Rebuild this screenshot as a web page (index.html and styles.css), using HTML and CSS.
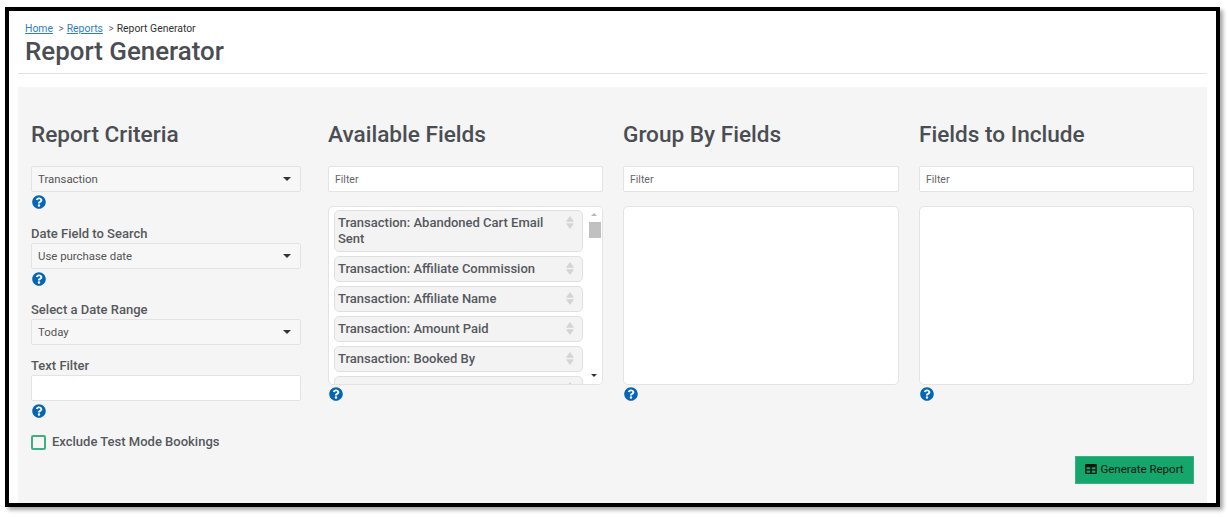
FILE: index.html
```html
<!DOCTYPE html>
<html lang="en">
<head>
<meta charset="utf-8">
<title>Report Generator</title>
<link rel="stylesheet" href="styles.css">
</head>
<body>
<svg class="defs" width="0" height="0" aria-hidden="true">
  <symbol id="help" viewBox="0 0 512 512"><path d="M504 256c0 137-111 248-248 248S8 393 8 256 119 8 256 8s248 111 248 248zM262.700 90c-54.500 0-89.300 23-116.500 63.800-3.500 5.300-2.400 12.400 2.700 16.300l34.700 26.300c5.200 3.900 12.600 3 16.700-2.100 17.900-22.700 30.100-35.800 57.300-35.800 20.400 0 45.700 13.100 45.700 33 0 15-12.400 22.700-32.600 34-23.600 13.200-54.800 29.700-54.800 70.900V300c0 6.600 5.400 12 12 12h56c6.600 0 12-5.400 12-12v-1.300c0-28.600 83.500-29.800 83.500-107.100C379.400 133.400 319 90 262.700 90zM256 339c-25.500 0-46.200 20.700-46.200 46.200s20.700 46.200 46.200 46.200 46.200-20.700 46.200-46.200S281.500 339 256 339z"/></symbol>
  <symbol id="sort" viewBox="0 0 10 16"><path d="M5 0l4.500 6.200a.6.600 0 0 1-.5 1H1a.6.600 0 0 1-.5-1zM5 16L.5 9.800a.6.600 0 0 1 .5-1h8a.6.600 0 0 1 .5 1z"/></symbol>
</svg>
<div class="frame">
  <header class="page-head">
    <nav class="crumbs"><a href="#">Home</a><span class="sep">&gt;</span><a href="#">Reports</a><span class="sep">&gt;</span><span class="current">Report Generator</span></nav>
    <h1>Report Generator</h1>
  </header>
  <main class="panel">
    <div class="columns">
      <section class="col col-criteria">
        <h2>Report Criteria</h2>
        <div class="select">Transaction</div>
        <svg class="help"><use href="#help"/></svg>
        <label class="label label-date">Date Field to Search</label>
        <div class="select">Use purchase date</div>
        <svg class="help"><use href="#help"/></svg>
        <label class="label label-range">Select a Date Range</label>
        <div class="select">Today</div>
        <label class="label label-text">Text Filter</label>
        <div class="text-input"></div>
        <svg class="help"><use href="#help"/></svg>
        <div class="check-row"><span class="check"></span><span>Exclude Test Mode Bookings</span></div>
      </section>
      <section class="col col-fields">
        <h2>Available Fields</h2>
        <div class="filter">Filter</div>
        <div class="list has-items">
          <div class="items">
            <div class="item"><span>Transaction: Abandoned Cart Email Sent</span><svg class="sort"><use href="#sort"/></svg></div>
            <div class="item"><span>Transaction: Affiliate Commission</span><svg class="sort"><use href="#sort"/></svg></div>
            <div class="item"><span>Transaction: Affiliate Name</span><svg class="sort"><use href="#sort"/></svg></div>
            <div class="item"><span>Transaction: Amount Paid</span><svg class="sort"><use href="#sort"/></svg></div>
            <div class="item"><span>Transaction: Booked By</span><svg class="sort"><use href="#sort"/></svg></div>
            <div class="item"><span>Transaction: Business Name</span><svg class="sort"><use href="#sort"/></svg></div>
          </div>
          <div class="scrollbar"><i class="arrow up"></i><i class="thumb"></i><i class="arrow down"></i></div>
        </div>
        <svg class="help list-help"><use href="#help"/></svg>
      </section>
      <section class="col col-group">
        <h2>Group By Fields</h2>
        <div class="filter">Filter</div>
        <div class="list"></div>
        <svg class="help list-help"><use href="#help"/></svg>
      </section>
      <section class="col col-include">
        <h2>Fields to Include</h2>
        <div class="filter">Filter</div>
        <div class="list"></div>
        <svg class="help list-help"><use href="#help"/></svg>
      </section>
    </div>
    <button class="generate" type="button">
      <svg class="table-icon" viewBox="0 0 14 12"><path fill-rule="evenodd" d="M1.200 0h11.600C13.500 0 14 .5 14 1.200v9.600c0 .7-.5 1.200-1.200 1.200H1.200C.5 12 0 11.500 0 10.800V1.200C0 .5.500 0 1.200 0zM1.600 4v2.300h4.500V4zM7.900 4v2.300h4.500V4zM1.600 7.700v2.700h4.500V7.700zM7.900 7.700v2.700h4.500V7.700z"/></svg>
      Generate Report
    </button>
  </main>
</div>
</body>
</html>
```
FILE: styles.css
```css
* { box-sizing: border-box; }
html, body { margin: 0; padding: 0; background: #fff; }
body { width: 1228px; height: 517px; overflow: hidden; font-family: Roboto, "Liberation Sans", sans-serif; color: #464a4e; }
.defs { display: block; height: 0; }
.frame { width: 1215px; height: 500px; margin: 7px 0 0 5px; border: 4px solid #000; background: #fff; padding: 0 9px; box-shadow: 3px 3px 4px rgba(0,0,0,.35); overflow: hidden; }
.page-head { height: 63px; border-bottom: 1px solid #e2e2e2; padding: 11px 0 0 7px; }
.crumbs { font-size: 10.400px; line-height: 13px; height: 13px; color: #333; white-space: nowrap; }
.crumbs a { color: #2f80c2; text-decoration: underline; }
.sep { display: inline-block; margin: 0 3px 0 5.500px; color: #666; font-size: 10px; }
h1 { margin: 0; font-size: 25.900px; line-height: 32px; font-weight: 500; color: #4a4e52; }
.panel { margin-top: 13px; height: 416px; background: #f5f5f5; padding: 34px 13px 0; position: relative; }
.columns { display: flex; }
.col-criteria { width: 270px; margin-right: 27px; }
.col-fields { width: 275px; margin-right: 20px; }
.col-group { width: 276px; margin-right: 20px; }
.col-include { width: 275px; }
h2 { margin: 0 0 17px; font-size: 22.600px; line-height: 27px; padding-bottom: 1px; font-weight: 500; color: #4a4e52; white-space: nowrap; }
.select, .filter, .text-input { height: 26px; border: 1px solid #e3e3e3; border-radius: 2px; font-size: 11.400px; line-height: 25px; padding-left: 6px; }
.select { background: #f7f7f7; position: relative; color: #555; }
.select::after { content: ""; position: absolute; right: 9px; top: 10px; border: 4px solid transparent; border-top-color: #333; border-bottom: 0; }
.filter { background: #fff; color: #666; font-size: 10.500px; }
.text-input { background: #fff; }
.help { display: block; width: 14px; height: 14px; margin: 3px 0 0 1px; fill: #0565b5; }
.label { display: block; font-size: 13px; line-height: 18px; font-weight: 500; color: #55595d; }
.label-date { margin-top: 16px; }
.label-range { margin-top: 15px; }
.label-text { margin-top: 12px; }
.check-row { display: flex; align-items: center; gap: 6px; margin-top: 16px; font-size: 13px; font-weight: 500; line-height: 16px; color: #55595d; }
.check { width: 15px; height: 15px; border: 2px solid #3fae85; border-radius: 2px; background: #f6f6f6; }
.list { height: 179px; margin-top: 14px; border: 1px solid #e3e3e3; border-radius: 5px; background: #fff; overflow: hidden; display: flex; }
.items { flex: 1; padding: 3px 4px 0 5px; overflow: hidden; }
.item { display: flex; justify-content: space-between; gap: 8px; background: #f3f3f3; border: 1px solid #e0e0e0; border-radius: 5px; font-size: 13px; font-weight: 500; line-height: 16px; padding: 4px 7px 4px 3px; margin-bottom: 4px; color: #55595d; }
.sort { flex: none; width: 8px; height: 13px; fill: #d4d4d4; margin: 1px 1px 0 0; }
.scrollbar { width: 15px; flex: none; position: relative; background: #fff; }
.arrow { position: absolute; left: 4px; border: 3.500px solid transparent; }
.arrow.up { top: 6px; border-bottom-color: #b8b8b8; border-top: 0; }
.arrow.down { bottom: 7px; border-top-color: #333; border-bottom: 0; }
.thumb { position: absolute; left: 2px; top: 15px; width: 12px; height: 16px; background: #c1c1c1; }
.list-help { margin-top: 2px; }
.generate { position: absolute; right: 13px; top: 369px; width: 119px; height: 28px; background: #14a66b; border: 1px solid #3ab285; color: #0c1512; font-family: inherit; font-size: 11.500px; font-weight: 400; padding: 0 0 2px; display: flex; align-items: center; justify-content: center; gap: 3px; }
.table-icon { width: 12px; height: 10px; fill: #06140e; }
```
